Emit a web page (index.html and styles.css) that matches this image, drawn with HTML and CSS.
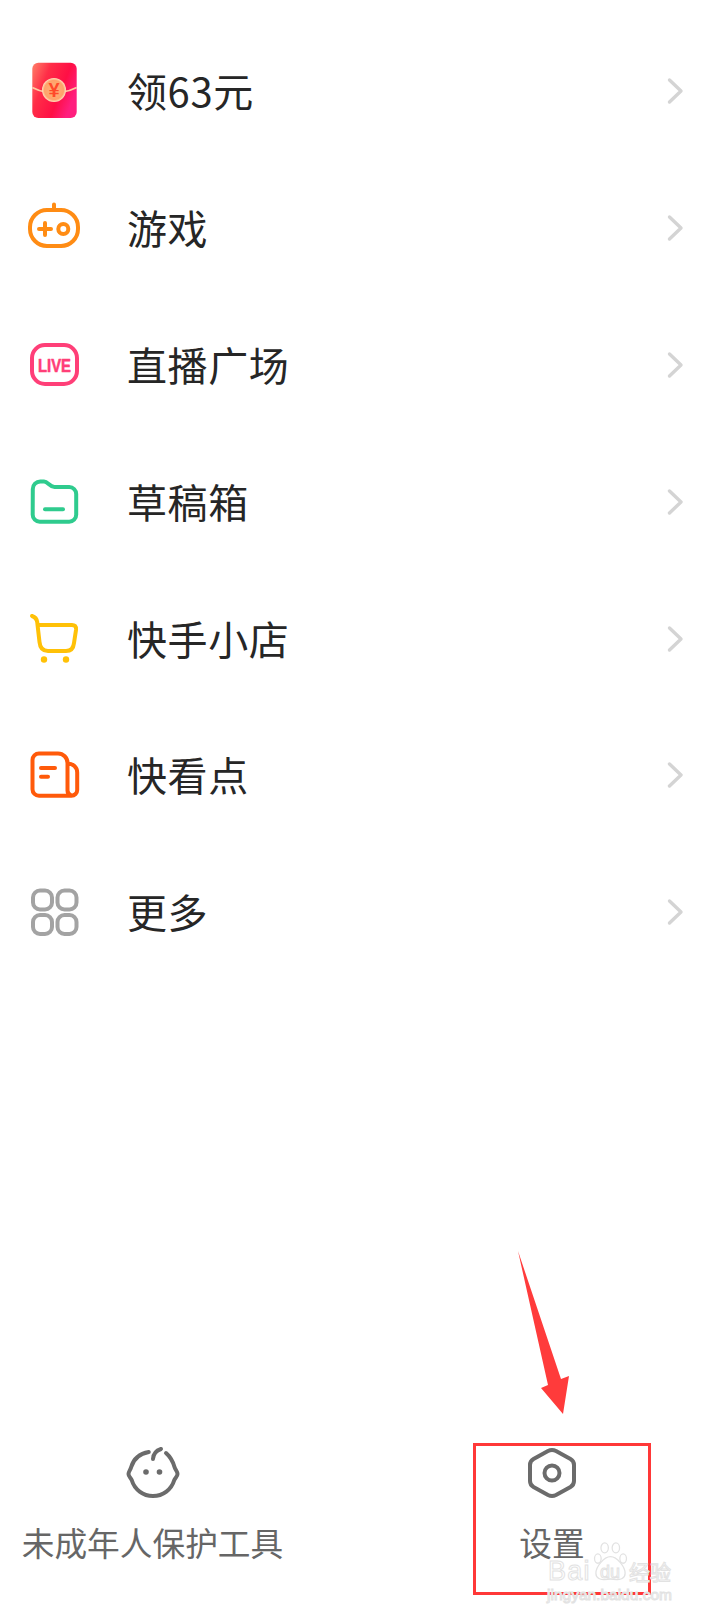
FILE: index.html
```html
<!DOCTYPE html>
<html lang="zh-CN">
<head>
<meta charset="utf-8">
<title>更多</title>
<link rel="stylesheet" href="styles.css">
</head>
<body>
<main class="page">
  <ul class="menu">
    <li class="row">
      <svg class="icon" viewBox="0 0 60 60">
        <defs>
          <linearGradient id="pk" x1="0" y1="0" x2="1" y2="0.5">
            <stop offset="0" stop-color="#ff8069"/>
            <stop offset="0.35" stop-color="#ff2d47"/>
            <stop offset="0.72" stop-color="#ff0f45"/>
            <stop offset="1" stop-color="#ff1f7e"/>
          </linearGradient>
          <radialGradient id="coin" cx="0.5" cy="0.5" r="0.5">
            <stop offset="0" stop-color="#ffb27a"/>
            <stop offset="0.8" stop-color="#ffa36a"/>
            <stop offset="1" stop-color="#ffe0bf"/>
          </radialGradient>
        </defs>
        <rect x="8.3" y="0.7" width="44.4" height="55.3" rx="6" fill="url(#pk)"/>
        <path d="M8.3 25.500C13 28 18 29.500 22 30M38 30C43 29.500 48 28 52.700 25.500" fill="none" stroke="#ffc9a0" stroke-width="1.8"/>
        <circle cx="30" cy="28" r="12" fill="url(#coin)"/>
        <text class="yen" x="30" y="35" text-anchor="middle">¥</text>
      </svg>
      <span class="label">领<span class="num">63</span>元</span>
      <svg class="chev" viewBox="0 0 18 30"><path d="M3.500 4L15 15L3.500 26"/></svg>
    </li>
    <li class="row">
      <svg class="icon line game" viewBox="0 0 60 60">
        <rect x="6" y="11" width="48" height="36" rx="17"/>
        <path d="M30 5.500V10M15 30H27M21 24V36"/>
        <circle cx="39.300" cy="30" r="5"/>
      </svg>
      <span class="label">游戏</span>
      <svg class="chev" viewBox="0 0 18 30"><path d="M3.500 4L15 15L3.500 26"/></svg>
    </li>
    <li class="row">
      <svg class="icon line live" viewBox="0 0 60 60">
        <rect x="8" y="9" width="45" height="39" rx="13"/>
        <text class="livetext" x="14" y="35.500" textLength="33" lengthAdjust="spacingAndGlyphs">LIVE</text>
      </svg>
      <span class="label">直播广场</span>
      <svg class="chev" viewBox="0 0 18 30"><path d="M3.500 4L15 15L3.500 26"/></svg>
    </li>
    <li class="row">
      <svg class="icon line folder" viewBox="0 0 60 60">
        <path d="M8.800 16a7.500 7.500 0 0 1 7.500-7.500h3.700c4 0 5.500 5.500 10.500 5.500h14.700a7 7 0 0 1 7 7v20.700a7 7 0 0 1-7 7h-29.500a7 7 0 0 1-7-7z"/>
        <path d="M21 36.300H39"/>
      </svg>
      <span class="label">草稿箱</span>
      <svg class="chev" viewBox="0 0 18 30"><path d="M3.500 4L15 15L3.500 26"/></svg>
    </li>
    <li class="row">
      <svg class="icon line cart" viewBox="0 0 60 60">
        <path d="M8 6C11 7 12.800 9 13.200 12L15.500 32C16 37.500 19 41 24 41H42C47 41 49.500 38 50 33L52 20C52.500 16 50.500 15 48 15H14"/>
        <circle class="dot" cx="20" cy="49.500" r="3.200"/>
        <circle class="dot" cx="42" cy="49.500" r="3.200"/>
      </svg>
      <span class="label">快手小店</span>
      <svg class="chev" viewBox="0 0 18 30"><path d="M3.500 4L15 15L3.500 26"/></svg>
    </li>
    <li class="row">
      <svg class="icon line article" viewBox="0 0 60 60">
        <path d="M43.500 17.500c5.500 0 9.700 3.500 9.700 9V44a5.700 5.700 0 0 1-5.700 5.700H15a6.500 6.500 0 0 1-6.500-6.500V14A6.500 6.500 0 0 1 15 7.500H34A9.500 9.500 0 0 1 43.500 17V44a5.700 5.700 0 0 0 4 5.700"/>
        <path d="M17 22H31M17 30.800H24"/>
      </svg>
      <span class="label">快看点</span>
      <svg class="chev" viewBox="0 0 18 30"><path d="M3.500 4L15 15L3.500 26"/></svg>
    </li>
    <li class="row">
      <svg class="icon line more" viewBox="0 0 60 60">
        <rect x="9" y="7.500" width="19" height="19" rx="7"/>
        <rect x="33.500" y="7.500" width="19" height="19" rx="7"/>
        <rect x="9" y="32" width="19" height="19" rx="7"/>
        <rect x="33.500" y="32" width="19" height="19" rx="7"/>
      </svg>
      <span class="label">更多</span>
      <svg class="chev" viewBox="0 0 18 30"><path d="M3.500 4L15 15L3.500 26"/></svg>
    </li>
  </ul>
  <footer class="tools">
    <div class="tool tool-left">
      <svg class="icon line grey" viewBox="0 0 60 60">
        <path d="M25.800 9C17 10.500 10.500 16 8.200 24C7.500 27 5.500 28.500 5.500 31C5.500 33.500 7.800 34.500 8.700 37C11.500 46.500 20 53 30 53C40 53 48.500 46.500 51.300 37C52.200 34.500 54.500 33.500 54.500 31C54.500 28.500 52.400 27 51.500 24C49.800 18 47 13.500 43 10"/>
        <path d="M30 16C30.300 11 33.500 7.500 38 6"/>
        <circle class="dot" cx="23" cy="29" r="2.800"/>
        <circle class="dot" cx="36.500" cy="29" r="2.800"/>
      </svg>
      <span class="tool-label">未成年人保护工具</span>
    </div>
    <div class="tool tool-right">
      <svg class="icon line grey" viewBox="0 0 60 60">
        <path d="M26 8Q30 6 34 8L48.500 16Q52 18 52 22V38Q52 42 48.500 44L34 52Q30 54 26 52L11.500 44Q8 42 8 38V22Q8 18 11.500 16Z"/>
        <circle cx="30" cy="30" r="7.500"/>
      </svg>
      <span class="tool-label">设置</span>
    </div>
  </footer>

  <div class="highlight"></div>
  <svg class="arrow" viewBox="0 0 60 170"><polygon points="2,1 45,129 53,126 47,164 25,138 32,135"/></svg>
  <div class="watermark">
    <svg class="paw" viewBox="0 0 38 40">
      <ellipse cx="6" cy="17" rx="3.400" ry="4.800"/>
      <ellipse cx="13" cy="6" rx="3.800" ry="5.200"/>
      <ellipse cx="24.500" cy="6" rx="3.800" ry="5.200"/>
      <ellipse cx="32" cy="17" rx="3.400" ry="4.800"/>
      <path d="M19 15C12 15 4 26 4 32C4 37.500 9 39 13 38.500C17 37.800 21 37.800 25 38.500C29 39 34 37.500 34 32C34 26 26 15 19 15Z"/>
    </svg>
    <span class="wm-bai">Bai</span>
    <span class="wm-du">du</span>
    <span class="wm-cn">经验</span>
    <span class="wm-url">jingyan.baidu.com</span>
  </div>
</main>
</body>
</html>
```
FILE: styles.css
```css
* { box-sizing: border-box; }
html, body { margin: 0; padding: 0; background: #fff; }
body { font-family: "Noto Sans CJK SC", "Noto Sans", sans-serif; }
.page {
  position: relative;
  width: 713px;
  height: 1618px;
  display: flex;
  flex-direction: column;
  overflow: hidden;
}
.menu {
  list-style: none;
  margin: 0;
  padding: 23.5px 0 0;
}
.row {
  height: 136.9px;
  display: flex;
  align-items: center;
  padding: 0 29px 0 24px;
}
.icon { width: 60px; height: 60px; flex: none; }
.line { fill: none; stroke-width: 4; stroke-linecap: round; stroke-linejoin: round; }
.line .dot { stroke: none; }
.game { stroke: #ff8c14; }
.live { stroke: #ff3f78; }
.folder { stroke: #2fcb8e; }
.cart { stroke: #ffc107; }
.cart .dot { fill: #ffc107; }
.article { stroke: #ff5a0a; }
.more { stroke: #a3a3a3; }
.grey { stroke: #6b6b6b; }
.grey .dot { fill: #6b6b6b; }
.livetext {
  font-family: "Liberation Sans", sans-serif;
  font-weight: 700;
  font-size: 19px;
  fill: #ff3f78;
  stroke: #ff3f78;
  stroke-width: 0.6;
}
.yen {
  font-family: "Liberation Sans", sans-serif;
  font-weight: 700;
  font-size: 20px;
  fill: #ff4a2a;
}
.label {
  margin: 0 0 4px 43px;
  font-size: 40px;
  line-height: 56px;
  letter-spacing: 0.6px;
  color: #262626;
}
.num { letter-spacing: 0.6px; }
.chev {
  width: 18px;
  height: 30px;
  margin: 0 0 2px auto;
  fill: none;
  stroke: #d4d4d4;
  stroke-width: 3.4;
  stroke-linecap: round;
  stroke-linejoin: round;
}
.tools {
  margin-top: auto;
  display: flex;
  justify-content: space-between;
  padding: 0 61px 54px 12px;
}
.tool {
  display: flex;
  flex-direction: column;
  align-items: center;
  gap: 17px;
}
.tool-left { width: 281px; }
.tool-right { width: 200px; }
.tool-label {
  font-size: 32.7px;
  line-height: 44px;
  color: #666;
  white-space: nowrap;
}
.highlight {
  position: absolute;
  left: 473px;
  top: 1443px;
  width: 178px;
  height: 152px;
  border: 3px solid #ff3838;
}
.arrow {
  position: absolute;
  left: 516px;
  top: 1250px;
  width: 60px;
  height: 170px;
  fill: #ff3b3b;
}
.watermark {
  position: absolute;
  left: 545px;
  top: 1540px;
  width: 130px;
  height: 66px;
  color: #fff;
  font-family: "Liberation Sans", sans-serif;
  -webkit-text-stroke: 1px #e2e2e2;
}
.paw {
  position: absolute;
  left: 47px;
  top: 2px;
  width: 37px;
  height: 39px;
  fill: #fff;
  fill-opacity: 0.6;
  stroke: #e2e2e2;
  stroke-width: 1.3;
}
.wm-bai { position: absolute; left: 3px; top: 17px; font-size: 27px; line-height: 28px; letter-spacing: 1.2px; }
.wm-du { position: absolute; left: 55px; top: 23px; font-size: 18px; line-height: 18px; }
.wm-cn {
  position: absolute;
  left: 84px;
  top: 16px;
  font-size: 21px;
  line-height: 30px;
  font-family: "Noto Sans CJK SC", sans-serif;
}
.wm-url { position: absolute; left: 2px; top: 46px; font-size: 15.5px; line-height: 18px; }
```
